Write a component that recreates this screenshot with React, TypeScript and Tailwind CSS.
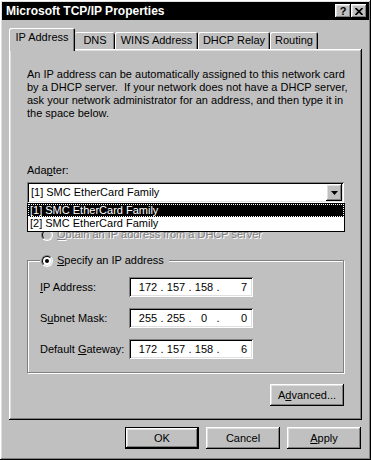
import React from "react";

// Win95 / NT4 style bevels
const raised =
  "shadow-[inset_-1px_-1px_#000,inset_1px_1px_#fff,inset_-2px_-2px_#808080,inset_2px_2px_#dfdfdf]";
const sunken =
  "shadow-[inset_1px_1px_#808080,inset_-1px_-1px_#fff,inset_2px_2px_#000,inset_-2px_-2px_#dfdfdf]";

const Radio = ({ checked = false, disabled = false }: { checked?: boolean; disabled?: boolean }) => (
  <span className="inline-flex w-[12px] h-[12px] shrink-0 rounded-full border border-t-[#808080] border-l-[#808080] border-r-white border-b-white">
    <span
      className={`flex items-center justify-center w-[10px] h-[10px] rounded-full border border-t-black border-l-black border-r-[#dfdfdf] border-b-[#dfdfdf] ${
        disabled ? "bg-[#c0c0c0]" : "bg-white"
      }`}
    >
      {checked && <span className="w-[4px] h-[4px] rounded-full bg-black" />}
    </span>
  </span>
);

const Button = ({ children, isDefault = false }: { children: React.ReactNode; isDefault?: boolean }) => (
  <div className={`w-[74px] h-[22px] ${isDefault ? "border border-black" : ""}`}>
    <div className={`w-full h-full flex items-center justify-center ${raised}`}>{children}</div>
  </div>
);

const IpField = ({ parts }: { parts: string[] }) => (
  <div className={`w-[124px] h-[20px] bg-white flex items-center pl-[8px] ${sunken}`}>
    <span className="w-[22px] text-center">{parts[0]}</span>
    <span className="w-[6px] text-center">.</span>
    <span className="w-[22px] text-center">{parts[1]}</span>
    <span className="w-[6px] text-center">.</span>
    <span className="w-[22px] text-center">{parts[2]}</span>
    <span className="w-[6px] text-center">.</span>
    <span className="flex-1 text-right pr-[6px]">{parts[3]}</span>
  </div>
);

const tabs = [
  { label: "DNS", w: "w-[40px]", edge: "shadow-[inset_0_1px_#fff,inset_-1px_0_#000,inset_-2px_0_#808080]" },
  { label: "WINS Address", w: "w-[83px]", edge: "shadow-[inset_1px_1px_#fff,inset_-1px_0_#000,inset_-2px_0_#808080]" },
  { label: "DHCP Relay", w: "w-[72px]", edge: "shadow-[inset_1px_1px_#fff,inset_-1px_0_#000,inset_-2px_0_#808080]" },
  { label: "Routing", w: "w-[48px]", edge: "shadow-[inset_1px_1px_#fff,inset_-1px_0_#000,inset_-2px_0_#808080]" },
];

export default function App() {
  return (
    <div className="w-[371px] h-[460px] bg-[#c0c0c0] font-['Liberation_Sans',Arial,sans-serif] text-[11px] leading-[13px] text-black">
      <div className={`w-full h-full p-[2px] flex flex-col ${raised}`}>
        {/* Title bar */}
        <div className="h-[18px] bg-black flex items-center justify-between pl-[4px] pr-[2px]">
          <span className="text-white font-bold text-[12px]">Microsoft TCP/IP Properties</span>
          <div className="flex">
            <div className={`w-[16px] h-[14px] bg-[#c0c0c0] flex items-center justify-center font-bold ${raised}`}>?</div>
            <div className={`w-[16px] h-[14px] bg-[#c0c0c0] flex items-center justify-center ${raised}`}>
              <svg width="8" height="7" viewBox="0 0 8 7">
                <path d="M0.5 0 L7.5 7 M7.5 0 L0.5 7" stroke="#000" strokeWidth="1.7" />
              </svg>
            </div>
          </div>
        </div>

        <div className="px-[7px] mt-[8px] flex flex-col">
          {/* Tabs */}
          <div className="flex items-end h-[23px] mb-[-2px]">
            <div className="relative z-10 w-[66px] h-[23px] bg-[#c0c0c0] rounded-t-[2px] pt-[3px] text-center shadow-[inset_1px_1px_#fff,inset_-1px_0_#000,inset_-2px_0_#808080]">
              IP Address
            </div>
            {tabs.map((t) => (
              <div
                key={t.label}
                className={`${t.w} h-[17px] mb-[2px] rounded-t-[2px] pt-[2px] text-center whitespace-nowrap ${t.edge}`}
              >
                {t.label}
              </div>
            ))}
          </div>

          {/* Tab panel */}
          <div className={`h-[371px] px-[18px] pt-[19px] flex flex-col ${raised}`}>
            <p className="whitespace-pre">
              {"An IP address can be automatically assigned to this network card\nby a DHCP server.  If your network does not have a DHCP server,\nask your network administrator for an address, and then type it in\nthe space below."}
            </p>

            <div className="mt-[44px]">
              Ada<u>p</u>ter:
            </div>

            <div className="relative mt-[5px]">
              <div className={`h-[21px] bg-white flex items-center pl-[4px] ${sunken}`}>
                <span className="flex-1">[1] SMC EtherCard Family</span>
                <div className={`w-[16px] h-[17px] mr-[2px] bg-[#c0c0c0] flex items-center justify-center ${raised}`}>
                  <svg width="7" height="4" viewBox="0 0 7 4">
                    <path d="M0 0 H7 L3.5 4 Z" fill="#000" />
                  </svg>
                </div>
              </div>

              {/* Open dropdown list */}
              <div className="absolute left-0 top-full z-10 w-[318px] border border-black bg-white">
                <div className="h-[13px] bg-black text-white pl-[2px] outline outline-1 outline-dotted outline-white -outline-offset-1">
                  [1] SMC EtherCard Family
                </div>
                <div className="h-[14px] pl-[2px]">[2] SMC EtherCard Family</div>
              </div>
            </div>

            <div className="mt-[25px] h-[13px] flex items-center pl-[14px] gap-[4px]">
              <Radio disabled />
              <span className="text-[#808080] [text-shadow:1px_1px_0_#fff]">
                <u>O</u>btain an IP address from a DHCP server
              </span>
            </div>

            <fieldset className="mt-[13px] border border-[#808080] shadow-[inset_1px_1px_#fff,1px_1px_#fff] pl-[12px] pr-[12px] pt-[10px] pb-[13px]">
              <legend className="bg-[#c0c0c0] pl-[1px] pr-[5px] flex items-center gap-[4px] h-[13px]">
                <Radio checked />
                <span>
                  <u>S</u>pecify an IP address
                </span>
              </legend>
              <div className="flex flex-col gap-[11px]">
                <div className="flex items-center">
                  <span className="w-[89px]">
                    <u>I</u>P Address:
                  </span>
                  <IpField parts={["172", "157", "158", "7"]} />
                </div>
                <div className="flex items-center">
                  <span className="w-[89px]">
                    S<u>u</u>bnet Mask:
                  </span>
                  <IpField parts={["255", "255", "0", "0"]} />
                </div>
                <div className="flex items-center">
                  <span className="w-[89px]">
                    Default <u>G</u>ateway:
                  </span>
                  <IpField parts={["172", "157", "158", "6"]} />
                </div>
              </div>
            </fieldset>

            <div className="flex justify-end mt-[11px]">
              <Button>
                <span>
                  A<u>d</u>vanced...
                </span>
              </Button>
            </div>
          </div>

          {/* Dialog buttons */}
          <div className="flex justify-end gap-[7px] mt-[7px] pr-[1px]">
            <Button isDefault>OK</Button>
            <Button>Cancel</Button>
            <Button>
              <span>
                <u>A</u>pply
              </span>
            </Button>
          </div>
        </div>
      </div>
    </div>
  );
}
